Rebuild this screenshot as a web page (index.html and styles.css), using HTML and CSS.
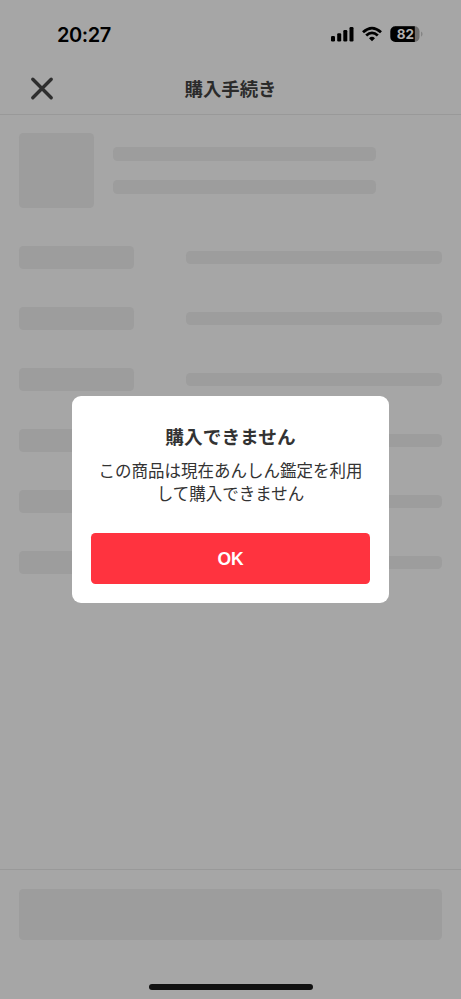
FILE: index.html
```html
<!DOCTYPE html>
<html lang="ja">
<head>
<meta charset="utf-8">
<meta name="viewport" content="width=device-width, initial-scale=1">
<title>購入手続き</title>
<link rel="stylesheet" href="styles.css">
</head>
<body>
<div class="screen">
  <div class="status">
    <time class="clock">20:27</time>
    <svg class="indicators" width="94" height="20" viewBox="0 0 94 20" aria-hidden="true">
      <rect x="1" y="11" width="4" height="5.5" rx="1.2"/>
      <rect x="7.2" y="8.3" width="4" height="8.2" rx="1.2"/>
      <rect x="13.3" y="5.1" width="4" height="11.4" rx="1.2"/>
      <rect x="19.5" y="2" width="4" height="14.5" rx="1.2"/>
      <g fill="none" stroke="#000" stroke-width="2.8">
        <path d="M33 7.2Q42 -1 51 7.2"/>
        <path d="M36.2 10.6Q42 5.2 47.8 10.6"/>
      </g>
      <path d="M39 13.2Q42 10.5 45 13.2L42 16.3Z"/>
      <path fill="#6f6f6f" d="M65 1.2H84.500a5 5 0 0 1 5 5V12a5 5 0 0 1-5 5H65Z"/>
      <path d="M65.300 1.200H84.800V17H65.300a5 5 0 0 1-5-5V6.200a5 5 0 0 1 5-5Z"/>
      <path fill="#858585" d="M91 6.500q1.600 .7 1.600 2.600T91 11.700Z"/>
      <text class="charge" x="75.300" y="14">82</text>
    </svg>
  </div>
  <header class="header">
    <svg class="close" width="22" height="22" viewBox="0 0 22 22" aria-hidden="true"><path d="M1.800 1.300 20.200 19.700M20.200 1.300 1.800 19.700"/></svg>
    <h1 class="title">購入手続き</h1>
  </header>
  <main class="content">
    <div class="product">
      <div class="bone thumb"></div>
      <div class="lines"><div class="bone line"></div><div class="bone line"></div></div>
    </div>
    <div class="rows">
      <div class="row"><div class="bone label"></div><div class="bone value"></div></div>
      <div class="row"><div class="bone label"></div><div class="bone value"></div></div>
      <div class="row"><div class="bone label"></div><div class="bone value"></div></div>
      <div class="row"><div class="bone label"></div><div class="bone value"></div></div>
      <div class="row"><div class="bone label"></div><div class="bone value"></div></div>
      <div class="row"><div class="bone label"></div><div class="bone value"></div></div>
    </div>
  </main>
  <footer class="footer">
    <div class="bone action"></div>
    <div class="home"></div>
  </footer>
  <div class="overlay">
    <section class="dialog" role="alertdialog">
      <h2 class="dialog-title">購入できません</h2>
      <p class="message">この商品は現在あんしん鑑定を利用<br>して購入できません</p>
      <button class="ok">OK</button>
    </section>
  </div>
</div>
</body>
</html>
```
FILE: styles.css
```css
* { box-sizing: border-box; }
body { margin: 0; font-family: "Noto Sans CJK JP", sans-serif; color: #333; }
.screen {
  position: relative;
  display: flex;
  flex-direction: column;
  height: 999px;
  overflow: hidden;
  background: #a6a6a6;
}
.status {
  display: flex;
  justify-content: space-between;
  align-items: center;
  height: 63px;
  padding: 6px 37px 0 57px;
}
.clock {
  font: 600 20px/24px Inter, sans-serif;
  letter-spacing: -0.450px;
  color: #000;
}
.charge {
  font: 700 13.500px Inter, sans-serif;
  fill: #b2b2b2;
  text-anchor: middle;
}
.header {
  display: grid;
  grid-template-columns: 22px 1fr 22px;
  align-items: center;
  height: 52px;
  padding: 0 31px;
  border-bottom: 1px solid #999;
}
.close { fill: none; stroke: #2e2e2e; stroke-width: 3.400; stroke-linecap: round; overflow: visible; }
.title { margin: -2px 0 0; font-size: 18.400px; font-weight: 700; line-height: 26px; text-align: center; color: #2b2b2b; }
.content { flex: 1; padding: 18.300px 19px 0; }
.bone { border-radius: 4.500px; background: #9d9d9d; }
.product { display: flex; gap: 18.700px; }
.thumb { width: 75px; height: 75px; }
.lines { display: flex; flex-direction: column; gap: 19px; padding-top: 14px; }
.line { width: 263.500px; height: 13.700px; }
.rows { display: flex; flex-direction: column; gap: 38px; padding-top: 37.700px; }
.row { display: flex; justify-content: space-between; align-items: center; }
.label { width: 115px; height: 23px; }
.value { width: 256px; height: 13.700px; }
.footer {
  display: flex;
  flex-direction: column;
  align-items: center;
  justify-content: space-between;
  height: 130px;
  padding: 19px 19px 9px;
  border-top: 1px solid #999;
}
.action { width: 100%; height: 51.300px; }
.home { width: 164px; height: 6px; border-radius: 3px; background: #111; }
.overlay {
  position: absolute;
  inset: 0;
  display: flex;
  align-items: center;
  justify-content: center;
}
.dialog {
  width: 317px;
  height: 206.500px;
  padding: 26px 19px 19px;
  border-radius: 9px;
  background: #fff;
  text-align: center;
}
.dialog-title { margin: 0; font-size: 18.700px; font-weight: 700; line-height: 27px; }
.message { margin: 10px -5px 0; font-size: 16.500px; line-height: 23px; white-space: nowrap; }
.ok {
  display: block;
  width: 100%;
  height: 51px;
  margin-top: 28px;
  padding: 2px 0 0;
  border: 0;
  border-radius: 4.500px;
  background: #ff333f;
  color: #fff;
  font: 700 17.500px "Liberation Sans", sans-serif;
}
```
